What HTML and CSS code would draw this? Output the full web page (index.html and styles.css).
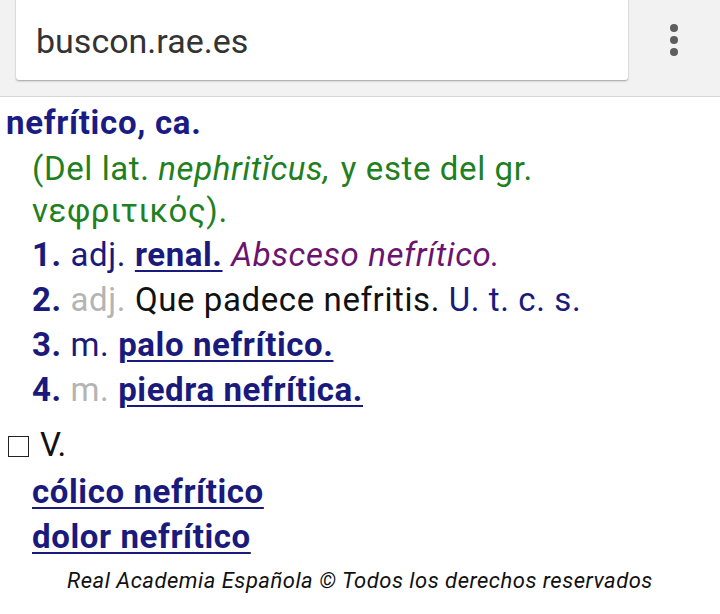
FILE: index.html
```html
<!DOCTYPE html>
<html lang="es">
<head>
<meta charset="utf-8">
<link rel="stylesheet" href="styles.css">
</head>
<body>
<header class="bar">
  <div class="url">buscon.rae.es</div>
  <div class="menu"><span></span><span></span><span></span></div>
</header>
<main class="entry">
  <h1 class="lemma">nefrítico, ca.</h1>
  <p class="ety">(Del lat. <i>nephritĭcus,</i> y este del gr. νεφριτικός).</p>
  <p class="acep"><b class="num">1.</b> <span class="abbr">adj.</span> <a href="#" class="lk">renal.</a> <i class="ex">Absceso nefrítico.</i></p>
  <p class="acep"><b class="num">2.</b> <span class="abbr gray">adj.</span> <span class="def">Que padece nefritis.</span> <span class="abbr">U. t. c. s.</span></p>
  <p class="acep"><b class="num">3.</b> <span class="abbr">m.</span> <a href="#" class="lk">palo nefrítico.</a></p>
  <p class="acep"><b class="num">4.</b> <span class="abbr gray">m.</span> <a href="#" class="lk">piedra nefrítica.</a></p>
  <p class="see"><span class="box"></span>V.</p>
  <p class="comp"><a href="#" class="lk">cólico nefrítico</a></p>
  <p class="comp"><a href="#" class="lk">dolor nefrítico</a></p>
  <p class="foot">Real Academia Española © Todos los derechos reservados</p>
</main>
</body>
</html>
```
FILE: styles.css
```css
html, body { margin: 0; padding: 0; }
body {
  width: 720px;
  height: 614px;
  overflow: hidden;
  background: #fff;
  font-family: Roboto, "Noto Sans", sans-serif;
}
.bar {
  height: 96px;
  background: #f2f2f2;
  border-bottom: 1px solid #d6d6d6;
  display: flex;
  align-items: flex-start;
}
.url {
  margin-left: 16px;
  margin-top: -6px;
  width: 612px;
  height: 86px;
  box-sizing: border-box;
  padding-left: 20px;
  padding-top: 27px;
  background: #fff;
  border-radius: 3px;
  box-shadow: 0 1px 2px rgba(0,0,0,0.35);
  font-size: 34px;
  color: #333;
  line-height: 40px;
}
.menu {
  margin-left: 42px;
  margin-top: 24px;
  display: flex;
  flex-direction: column;
  gap: 4px;
}
.menu span {
  width: 8px; height: 8px; border-radius: 50%; background: #5e5e5e;
}
.entry p, .entry h1 { margin: 0; }
.lemma {
  font-size: 33px;
  font-weight: 700;
  letter-spacing: 0.7px;
  color: #1b1b84;
  padding-left: 6px;
  line-height: 46px;
  margin-top: 3px !important;
  margin-bottom: 2px !important;
}
.ety {
  color: #1f801f;
  font-size: 33px;
  letter-spacing: 0.6px;
  line-height: 42px;
  padding-left: 32px;
  width: 560px;
}
.ety i { margin-right: 2px; }
.acep, .comp {
  font-size: 33px;
  letter-spacing: 0.6px;
  line-height: 45px;
  padding-left: 32px;
  color: #1a1a7c;
}
.num { font-weight: 700; color: #1a1a7c; }
.abbr { color: #1a1a7c; }
.gray { color: #b4b4b4; }
.def { color: #111; }
.ex { color: #6a1470; }
.lk {
  color: #1a1a7c;
  font-weight: 700;
  text-decoration: underline;
  text-decoration-thickness: 2px;
  text-underline-offset: 4px;
}
.see {
  font-size: 33px;
  line-height: 48px;
  color: #111;
  padding-left: 8px;
  margin-top: 9px !important;
  display: flex;
  align-items: center;
}
.box {
  width: 21px; height: 21px; border: 1.5px solid #222;
  box-sizing: border-box;
  margin-right: 11px;
  margin-top: 2px;
}
.foot {
  font-size: 22px;
  font-style: italic;
  color: #111;
  text-align: center;
  line-height: 30px;
  letter-spacing: 0.5px;
  margin-top: 7px !important;
}
```
